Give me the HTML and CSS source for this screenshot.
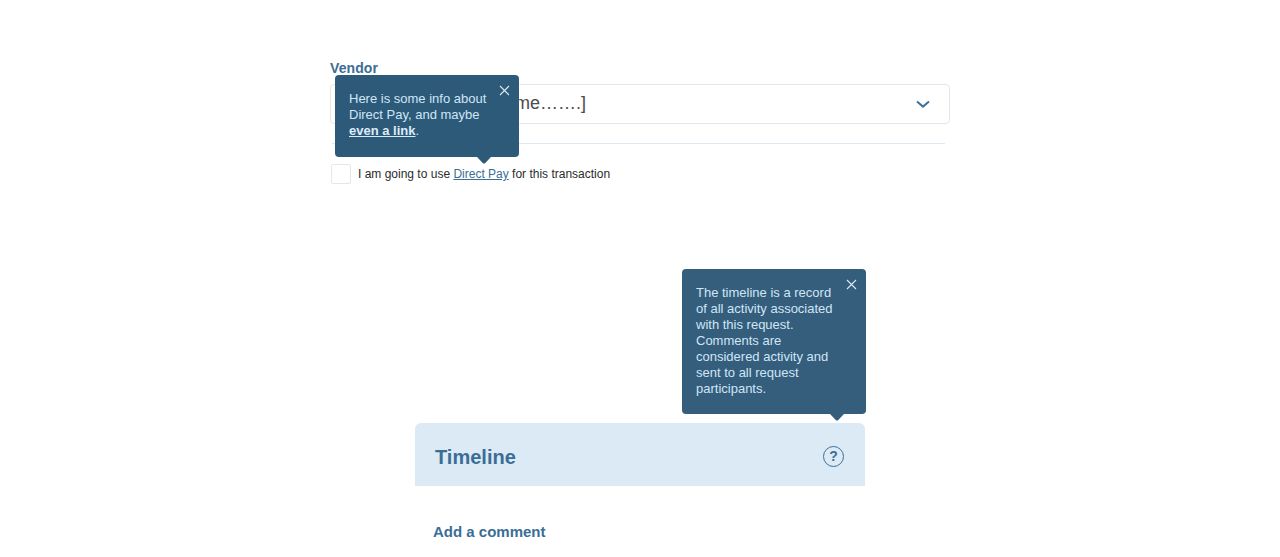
FILE: index.html
```html
<!DOCTYPE html>
<html lang="en">
<head>
<meta charset="utf-8">
<title>Tooltips</title>
<link rel="stylesheet" href="styles.css">
</head>
<body>
<main class="page">
  <section class="vendor">
    <label class="vendor-label">Vendor</label>
    <div class="select">
      <span class="select-value">me…….]</span>
      <svg class="chevron" width="14" height="10" viewBox="0 0 14 10"><path d="M1 2.6 L7 7.6 L13 2.6" fill="none" stroke="#3a72a0" stroke-width="2"/></svg>
    </div>
    <hr class="divider">
    <div class="option">
      <span class="checkbox"></span>
      <span class="option-text">I am going to use <a class="pay-link">Direct Pay</a> for this transaction</span>
    </div>
    <aside class="tooltip tooltip-pay">
      <p class="tip-text">Here is some info about<br>Direct Pay, and maybe<br><a class="tip-link">even a link</a>.</p>
      <svg class="close" width="11" height="11" viewBox="0 0 11 11"><path d="M1 1 L10 10 M10 1 L1 10" stroke="#dbe9f4" stroke-width="1.1"/></svg>
      <svg class="arrow" width="16" height="9" viewBox="0 0 16 9"><path d="M0 0 V.8 H.8 L7 7.2 Q8 8 9 7.2 L15.2 .8 H16 V0Z" fill="#2d5a79"/></svg>
    </aside>
  </section>
  <section class="timeline">
    <header class="timeline-head">
      <h2 class="timeline-title">Timeline</h2>
      <span class="help">?</span>
    </header>
    <h3 class="comment-title">Add a comment</h3>
    <aside class="tooltip tooltip-timeline">
      <p class="tip-text">The timeline is a record<br>of all activity associated<br>with this request.<br>Comments are<br>considered activity and<br>sent to all request<br>participants.</p>
      <svg class="close" width="11" height="11" viewBox="0 0 11 11"><path d="M1 1 L10 10 M10 1 L1 10" stroke="#dbe9f4" stroke-width="1.1"/></svg>
      <svg class="arrow" width="16" height="9" viewBox="0 0 16 9"><path d="M0 0 V.8 H.8 L7 7.2 Q8 8 9 7.2 L15.2 .8 H16 V0Z" fill="#355d7c"/></svg>
    </aside>
  </section>
</main>
</body>
</html>
```

FILE: styles.css
```css
* { box-sizing: border-box; }
body { margin: 0; background: #fff; font-family: "Liberation Sans", Arial, sans-serif; overflow: hidden; }
.page { height: 557px; padding-top: 60px; }
.vendor { position: relative; width: 620px; margin-left: 330px; height: 363px; }
.vendor-label { display: block; height: 24px; font-size: 14px; line-height: 16px; font-weight: bold; letter-spacing: 0.1px; color: #3a6e96; }
.select { display: flex; align-items: center; justify-content: space-between; height: 40px; padding: 0 19px 0 0; border: 1px solid #e6e6e6; border-radius: 4px; }
.select-value { width: 255px; padding-bottom: 2px; text-align: right; font-size: 18px; line-height: 20px; color: #4c4c4c; white-space: nowrap; }
.chevron { display: block; }
.divider { width: 613px; height: 1px; margin: 19px 0 0 2px; border: 0; background: #dfe8ef; }
.option { display: flex; align-items: center; gap: 7px; height: 20px; margin: 20px 0 0 1px; }
.checkbox { width: 20px; height: 20px; border: 1px solid #e6e6e6; border-radius: 2px; }
.option-text { font-size: 12px; line-height: 16px; color: #2b2b2b; white-space: nowrap; }
.pay-link { color: #3a6e96; text-decoration: underline; }
.tooltip { position: absolute; width: 184px; padding: 16px 14px; border-radius: 4px; color: #cfe6f7; }
.tip-text { margin: 0; font-size: 13px; line-height: 16px; white-space: nowrap; }
.tip-link { font-weight: bold; text-decoration: underline; color: #dcebf8; }
.close { position: absolute; top: 10px; right: 9px; }
.arrow { position: absolute; top: 100%; margin-top: -1px; }
.tooltip-pay { left: 5px; top: 15px; height: 82px; background: #2d5a79; }
.tooltip-pay .arrow { left: 141px; }
.timeline { position: relative; width: 450px; margin-left: 415px; }
.timeline-head { display: flex; align-items: center; justify-content: space-between; height: 63px; padding: 4px 21px 0 20px; background: #dceaf5; border-radius: 6px 6px 0 0; }
.timeline-title { margin: 0; font-size: 20px; line-height: 24px; font-weight: bold; color: #3a6e96; }
.help { display: flex; align-items: center; justify-content: center; width: 21px; height: 21px; margin-bottom: 1px; border: 1px solid #3a6e96; border-radius: 50%; font-size: 14px; line-height: 16px; font-weight: bold; color: #3a6e96; }
.comment-title { margin: 37px 0 0 18px; font-size: 15px; line-height: 18px; font-weight: bold; color: #3a6e96; }
.tooltip-timeline { left: 267px; top: -154px; height: 145px; background: #355d7c; }
.tooltip-timeline .arrow { left: 147px; }
```
